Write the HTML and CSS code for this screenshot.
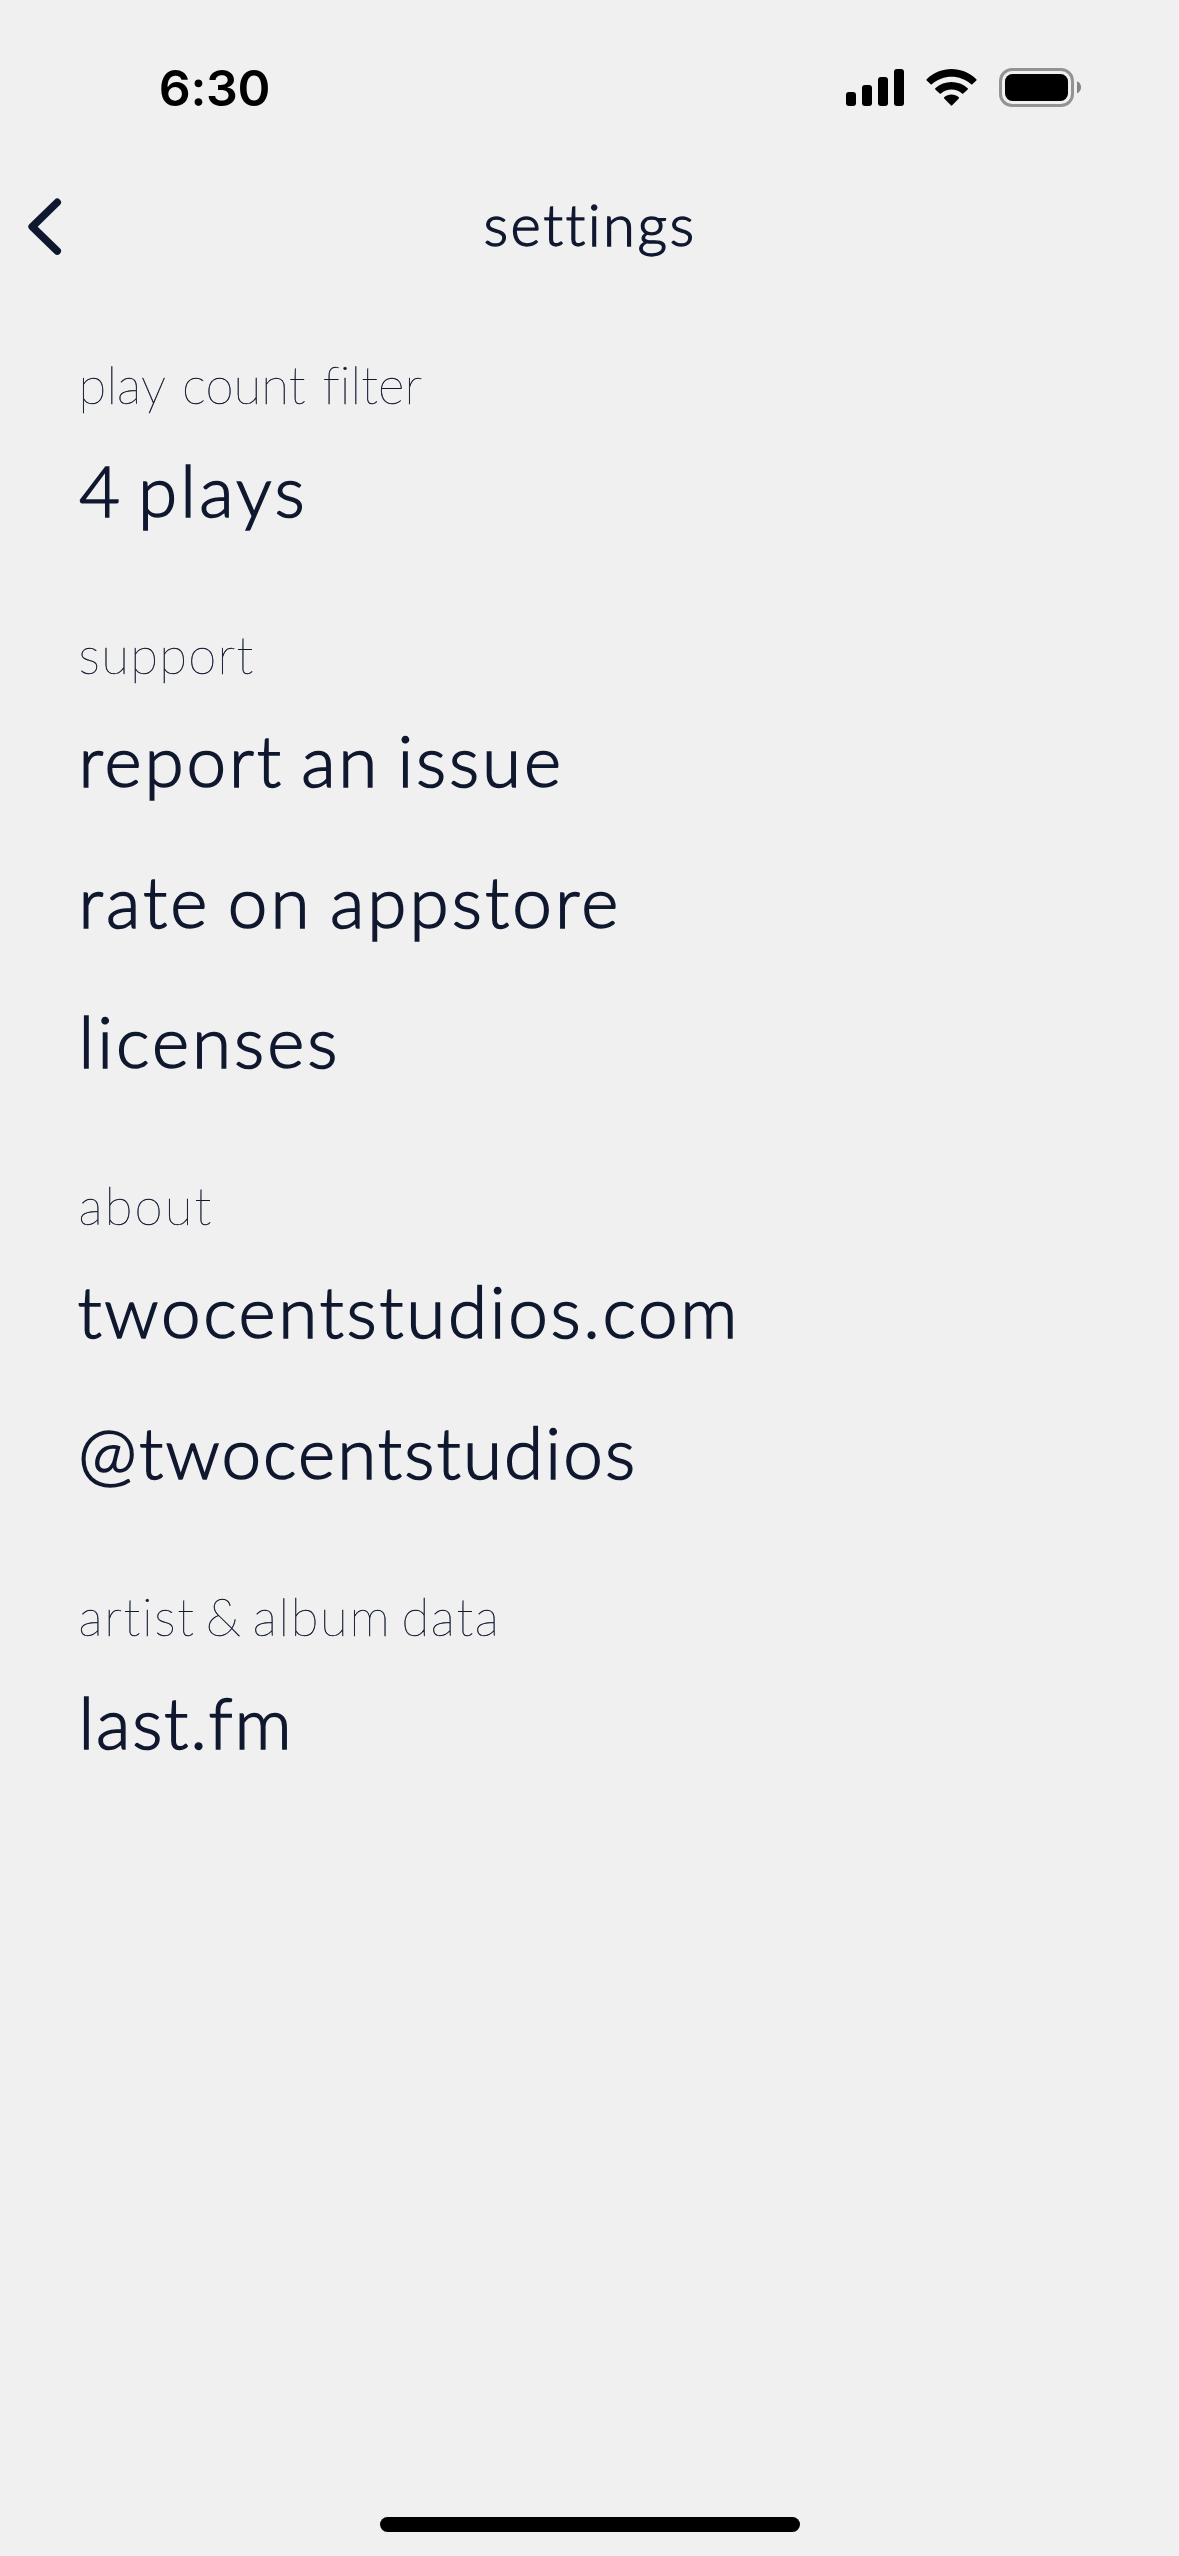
FILE: index.html
```html
<!DOCTYPE html>
<html lang="en">
<head>
<meta charset="utf-8">
<title>settings</title>
<link rel="stylesheet" href="styles.css">
</head>
<body>
<div class="screen">
  <div class="status">
    <span class="time">6:30</span>
    <div class="indicators">
      <svg class="signal" width="58" height="37" viewBox="0 0 58 37">
        <rect x="0" y="23" width="10" height="14" rx="3"/>
        <rect x="16" y="16" width="10" height="21" rx="3"/>
        <rect x="32" y="8" width="10" height="29" rx="3"/>
        <rect x="48" y="0" width="10" height="37" rx="3"/>
      </svg>
      <svg class="wifi" width="51" height="37" viewBox="0 0 51 37">
        <path d="M.7 10.3C14.5-3.4 36.500-3.4 50.300 10.300Q50.900 11 50.300 11.600L46.300 15.300Q45.800 15.800 45.200 15.300C34 5.100 17 5.100 5.800 15.300Q5.200 15.800 4.700 15.300L.7 11.600Q.1 11 .7 10.300Z"/>
        <path d="M9.300 19.300C18.300 10.800 32.700 10.800 41.700 19.300Q42.200 19.900 41.700 20.400L37.300 24.500Q36.700 25 36.100 24.500C30 19.300 21 19.300 14.900 24.500Q14.300 25 13.700 24.500L9.300 20.400Q8.800 19.900 9.300 19.300Z"/>
        <path d="M18.200 28.300C22.400 24.600 28.600 24.600 32.800 28.300Q33.400 28.900 32.800 29.500L26.200 36.300Q25.500 37 24.800 36.300L18.200 29.500Q17.600 28.900 18.200 28.300Z"/>
      </svg>
      <svg class="battery" width="82" height="39" viewBox="0 0 82 39">
        <rect x="1.500" y="1.500" width="72" height="36" rx="11.500" fill="none" stroke="#939393" stroke-width="3"/>
        <rect x="6" y="6" width="63" height="27" rx="7.500"/>
        <path d="M78 13.200Q82 15 82 19.300Q82 23.600 78 25.400Z" fill="#858585"/>
      </svg>
    </div>
  </div>
  <header class="nav">
    <svg class="back" width="34" height="58" viewBox="0 0 34 58">
      <path d="M29.200 4.400L4.200 28.700L29.200 53"/>
    </svg>
    <h1 class="title">settings</h1>
  </header>
  <main class="list">
    <h2 class="label filter">play count filter</h2>
    <div class="row plays">4 plays</div>
    <h2 class="label support">support</h2>
    <div class="row">report an issue</div>
    <div class="row rate">rate on appstore</div>
    <div class="row licenses">licenses</div>
    <h2 class="label about">about</h2>
    <div class="row site">twocentstudios.com</div>
    <div class="row handle">@twocentstudios</div>
    <h2 class="label data">artist &amp; album data</h2>
    <div class="row lastfm">last.fm</div>
  </main>
  <div class="home"></div>
</div>
</body>
</html>
```
FILE: styles.css
```css
* {
  box-sizing: border-box;
}

body {
  margin: 0;
  background: #f0f0f0;
  color: #0f182f;
  font-family: Lato, sans-serif;
}

.screen {
  display: flex;
  flex-direction: column;
  width: 1179px;
  height: 2556px;
}

.status {
  display: flex;
  align-items: center;
  justify-content: space-between;
  height: 160px;
  padding: 16px 98px 0 158.7px;
  color: #000;
}

.time {
  font: 600 50px/60px Inter, sans-serif;
  letter-spacing: -0.29px;
}

.indicators {
  display: flex;
  align-items: center;
}

.signal,
.wifi {
  margin-top: -1px;
}

.wifi {
  margin-left: 22px;
  margin-right: 22px;
}

.battery {
  margin-top: -1px;
}

.nav {
  display: grid;
  grid-template-columns: 140px 1fr 140px;
  align-items: center;
  height: 127px;
}

.back {
  margin: 6px 0 0 27.500px;
  fill: none;
  stroke: #0f182f;
  stroke-width: 7.600px;
  stroke-linecap: round;
  stroke-linejoin: round;
}

.title {
  margin: 0;
  padding-left: 1px;
  font-size: 58px;
  font-weight: 300;
  line-height: 68px;
  letter-spacing: 2.440px;
  text-align: center;
  -webkit-text-stroke: 1.300px #0f182f;
}

.list {
  flex: 1;
  padding: 3px 78.600px 0;
}

.label {
  margin: 0;
  padding-top: 60px;
  font-size: 51px;
  font-weight: 100;
  line-height: 70px;
  -webkit-text-stroke: 0.450px #0f182f;
}

.row {
  height: 140.330px;
  font-size: 71px;
  font-weight: 300;
  line-height: 140px;
  letter-spacing: 2.850px;
  word-spacing: -5px;
  -webkit-text-stroke: 1.500px #0f182f;
}

.filter { letter-spacing: 0.100px; word-spacing: 2.500px; }
.support { letter-spacing: 1.300px; }
.about { letter-spacing: 2.090px; }
.data { letter-spacing: 1.650px; word-spacing: -6px; }
.plays { letter-spacing: 3.200px; word-spacing: -8px; text-indent: 0.500px; }
.rate { letter-spacing: 3.070px; }
.licenses { letter-spacing: 3px; }
.site { letter-spacing: 2.650px; text-indent: -1.200px; }
.handle { letter-spacing: 2.100px; text-indent: -0.500px; }
.lastfm { letter-spacing: 1.750px; }

.home {
  align-self: center;
  width: 420px;
  height: 15px;
  margin-bottom: 24px;
  border-radius: 8px;
  background: #000;
}
```
